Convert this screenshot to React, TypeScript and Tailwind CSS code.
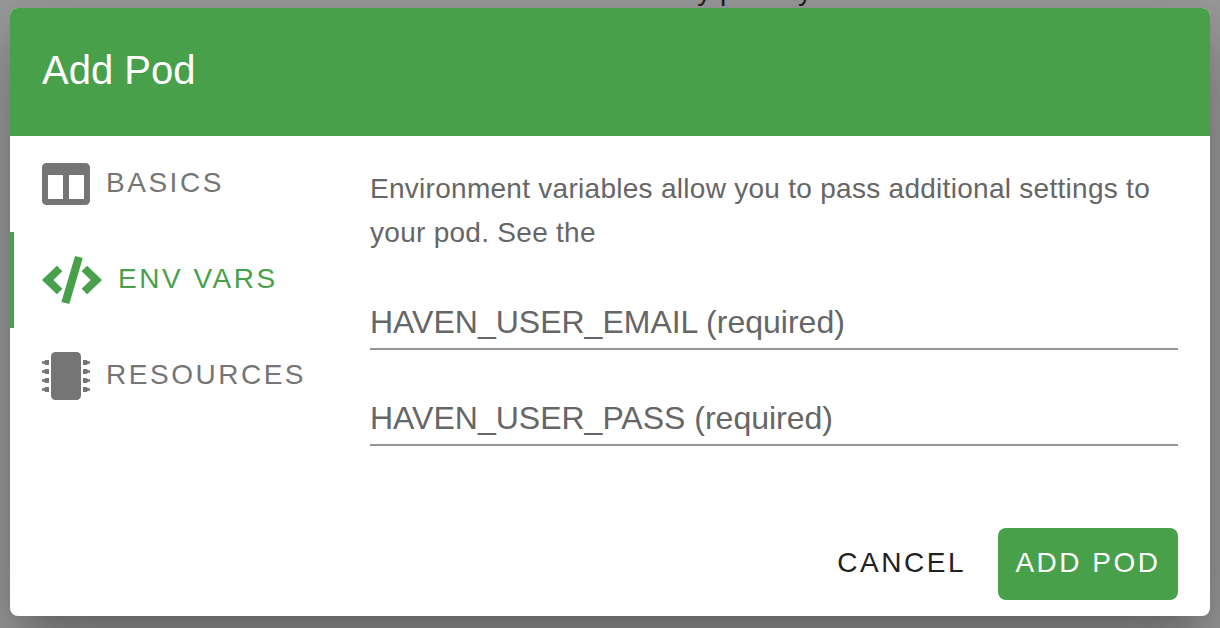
import { useState } from "react";
import type { ReactNode } from "react";

function ColumnsIcon() {
  return (
    <svg className="h-12 w-12 shrink-0" viewBox="0 0 48 48" fill="currentColor" aria-hidden="true">
      <path
        fillRule="evenodd"
        d="M4.500 3h39A4.500 4.500 0 0 1 48 7.500v33a4.500 4.500 0 0 1-4.500 4.500h-39A4.500 4.500 0 0 1 0 40.500v-33A4.500 4.500 0 0 1 4.500 3ZM6 15v24h15V15ZM27 15v24h15V15Z"
      />
    </svg>
  );
}

function CodeIcon() {
  return (
    <svg className="h-12 w-15 shrink-0" viewBox="0 0 60 48" fill="currentColor" aria-hidden="true">
      <path d="M33 0 40.800 2.100 27.300 48 19.400 45.900Z" />
      <path d="M14.900 9.700 20.400 15.300 11.300 24 20.400 32.700 14.900 38.300 0 24Z" />
      <path d="M45.100 9.700 39.600 15.300 48.700 24 39.600 32.700 45.100 38.300 60 24Z" />
    </svg>
  );
}

const pinRows = [10.5, 19.5, 28.5, 37.5];

function ChipIcon() {
  return (
    <svg className="h-12 w-12 shrink-0" viewBox="0 0 48 48" fill="currentColor" aria-hidden="true">
      <rect x="9" width="30" height="48" rx="4.500" />
      {pinRows.map((y) => (
        <g key={y}>
          <path d={`M7 ${y - 2.5}H3.500L2 ${y - 1.2}H0V${y + 1.2}H2L3.500 ${y + 2.5}H7Z`} />
          <path d={`M41 ${y - 2.5}H44.500L46 ${y - 1.2}H48V${y + 1.2}H46L44.500 ${y + 2.5}H41Z`} />
        </g>
      ))}
    </svg>
  );
}

const tabs: { id: string; label: string; icon: ReactNode }[] = [
  { id: "basics", label: "BASICS", icon: <ColumnsIcon /> },
  { id: "env", label: "ENV VARS", icon: <CodeIcon /> },
  { id: "resources", label: "RESOURCES", icon: <ChipIcon /> },
];

function Field({ name }: { name: string }) {
  return (
    <div className="grid content-end text-[32px] leading-[44px]">
      <input
        id={name}
        placeholder=" "
        className="peer col-start-1 row-start-1 h-[50px] w-full min-w-0 border-b-2 border-[#949494] bg-transparent pb-1 text-[#212121] outline-none"
      />
      <label
        htmlFor={name}
        className="pointer-events-none invisible col-start-1 row-start-1 text-[#666666] peer-placeholder-shown:visible"
      >
        {name} (required)
      </label>
    </div>
  );
}

export default function App() {
  const [active, setActive] = useState("env");

  return (
    <div className="relative min-h-screen overflow-hidden bg-[#9b9b9b] px-[10px] pt-2 pb-3 font-['Liberation_Sans',Arial,sans-serif]">
      <p className="absolute -top-[25px] left-[681px] text-[28px] leading-8 tracking-[0.02em] text-[#212121]">by privacy</p>
      <section
        role="dialog"
        aria-labelledby="dialog-title"
        className="relative flex flex-col overflow-hidden rounded-lg bg-white shadow-[0_22px_30px_-14px_rgba(0,0,0,0.2),0_48px_76px_6px_rgba(0,0,0,0.14),0_18px_92px_16px_rgba(0,0,0,0.12)]"
      >
        <header className="flex h-32 items-center bg-[#48a04b] px-8 pb-1">
          <h1 id="dialog-title" className="text-[40px] leading-[64px] text-white">
            Add Pod
          </h1>
        </header>

        <div className="flex">
          <nav className="flex w-[328px] shrink-0 flex-col" role="tablist" aria-label="Pod settings">
            {tabs.map((tab) => (
              <button
                key={tab.id}
                type="button"
                role="tab"
                aria-selected={active === tab.id}
                onClick={() => setActive(tab.id)}
                className={`flex h-24 items-center gap-4 border-l-4 pl-7 text-[28px] leading-8 tracking-[0.09em] ${
                  active === tab.id ? "border-[#48a04b] text-[#48a04b]" : "border-transparent text-[#757575]"
                }`}
              >
                {tab.icon}
                <span className="pb-0.5">{tab.label}</span>
              </button>
            ))}
          </nav>

          <div className="min-w-0 flex-1 px-8 pt-[31px] pb-[66px]">
            <p className="text-[28px] leading-[44px] tracking-[0.01em] text-[#666666]">
              Environment variables allow you to pass additional settings to your pod. See the
            </p>
            <div className="mt-[45px] flex flex-col gap-[46px]">
              <Field name="HAVEN_USER_EMAIL" />
              <Field name="HAVEN_USER_PASS" />
            </div>
          </div>
        </div>

        <footer className="flex justify-end gap-4 px-8 py-4 text-[28px] leading-8 tracking-[0.09em]">
          <button type="button" className="h-[72px] rounded-lg px-4 pb-0.5 text-[#212121]">
            CANCEL
          </button>
          <button type="button" className="h-[72px] min-w-[180px] rounded-lg bg-[#48a04b] px-4 pb-0.5 text-white">
            ADD POD
          </button>
        </footer>
      </section>
    </div>
  );
}
